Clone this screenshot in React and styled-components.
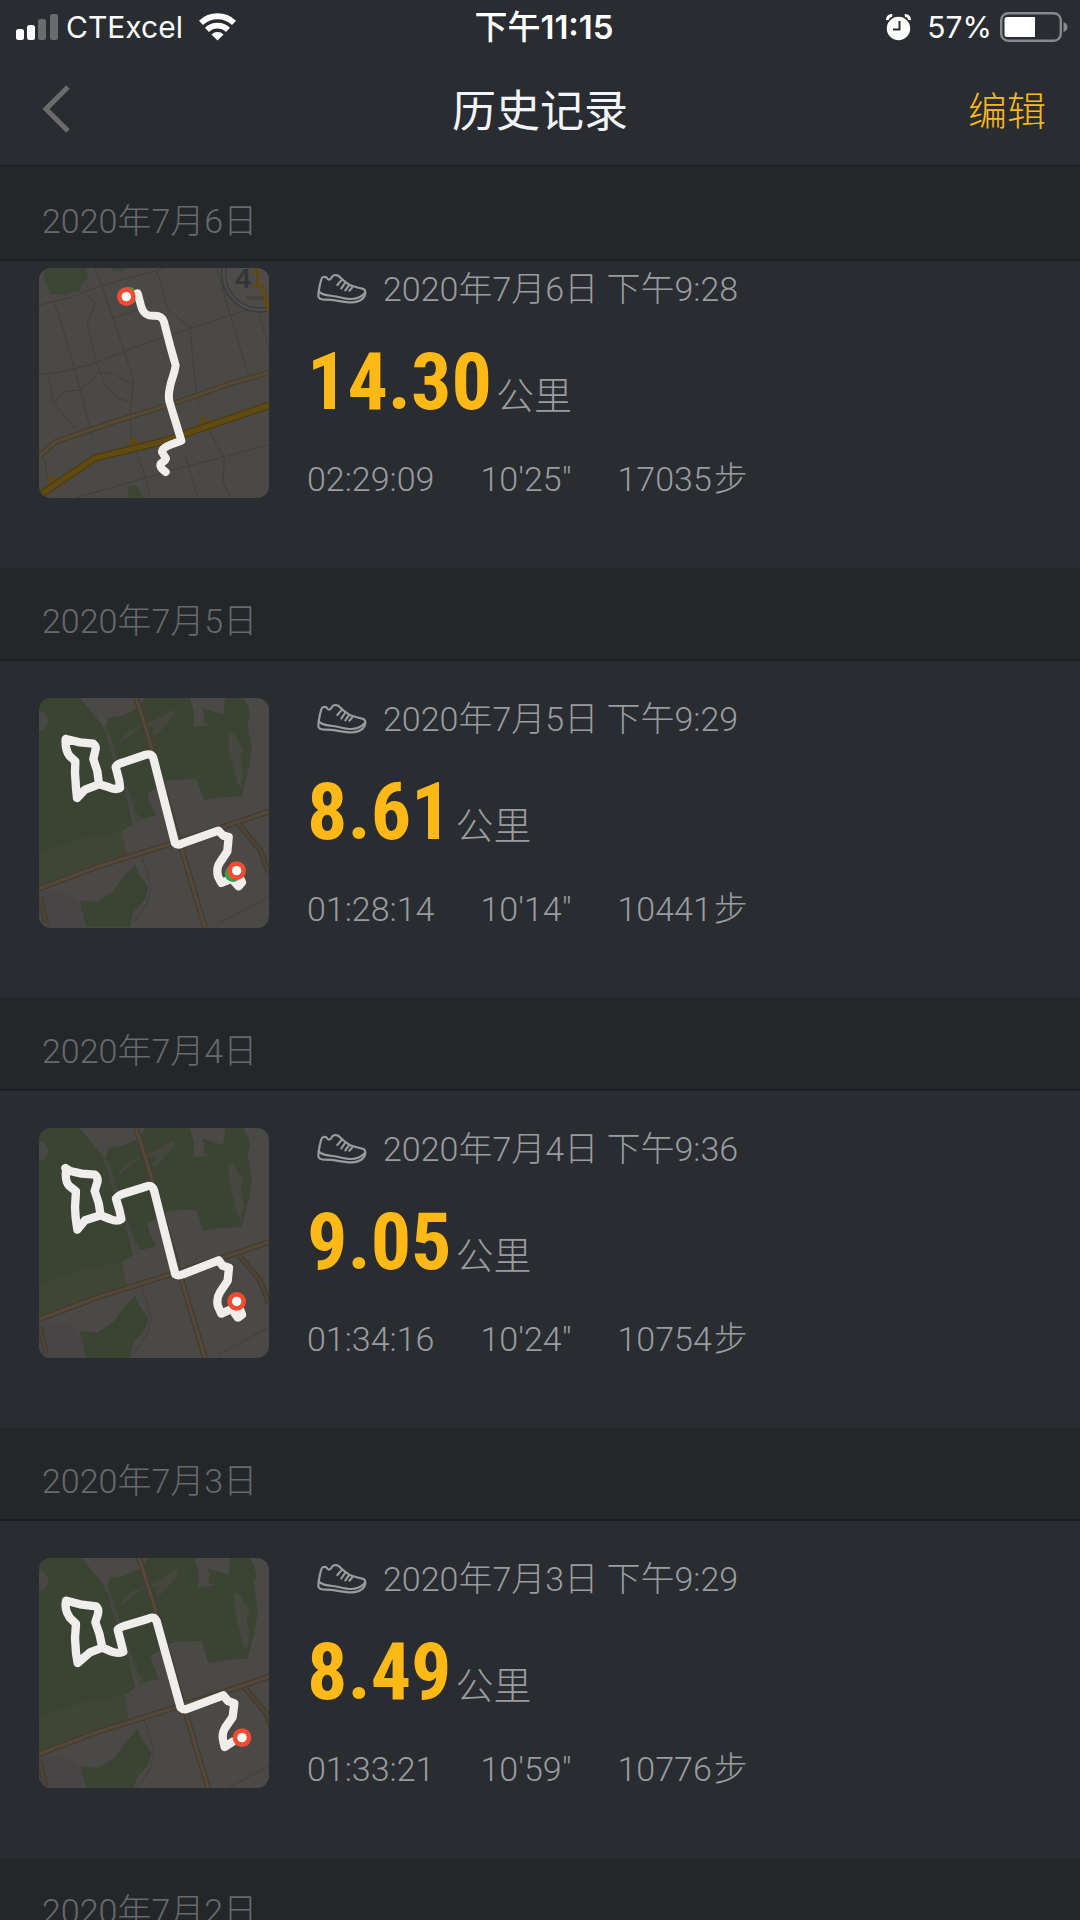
import React from "react";
import styled, { createGlobalStyle } from "styled-components";

const colors = {
  surface: "#292c31",
  header: "#24272a",
  line: "#1c1e21",
  text: "#9b9c9f",
  muted: "#67696c",
  accent: "#ffb916",
};

const GlobalStyle = createGlobalStyle`
  * {
    box-sizing: border-box;
  }

  body {
    margin: 0;
    background-color: ${colors.surface};
    color: ${colors.text};
    font-family: Roboto, "Noto Sans CJK SC", sans-serif;
    font-weight: 300;
  }
`;

const Screen = styled.div`
  height: 100vh;
  overflow: hidden;
`;

const StatusBar = styled.div`
  display: grid;
  grid-template-columns: 1fr auto 1fr;
  align-items: center;
  height: 54px;
  padding: 0 12px 0 16px;
  color: #ffffff;
  font-family: Inter, "Noto Sans CJK SC", sans-serif;
  font-size: 30px;
  font-weight: 400;
  line-height: 54px;
`;

const StatusGroup = styled.div`
  display: flex;
  align-items: center;
  gap: 8px;
  justify-content: ${props => (props.$end ? "flex-end" : "flex-start")};
`;

const Carrier = styled.span`
  margin-right: 8px;
`;

const Percent = styled.span`
  margin-left: 8px;
`;

const Clock = styled.div`
  padding-left: 4px;
  font-size: 33px;
  font-weight: 600;
`;

const Meridiem = styled.span`
  font-weight: 500;
`;

const Icon = styled.svg`
  display: block;
  flex: none;
`;

const NavBar = styled.header`
  display: grid;
  grid-template-columns: 1fr auto 1fr;
  align-items: center;
  height: 112px;
  padding: 0 34px 2px;
  border-bottom: 1px solid ${colors.line};
`;

const BackButton = styled.button`
  padding: 0 8px;
  border: 0;
  background: none;
  justify-self: start;
`;

const EditButton = styled.button`
  padding: 6px 0 0;
  border: 0;
  background: none;
  color: ${colors.accent};
  font-family: inherit;
  font-size: 39px;
  font-weight: 300;
  line-height: 48px;
  justify-self: end;
`;

const Title = styled.h1`
  margin: 0;
  padding-top: 6px;
  color: #f3f4f8;
  font-size: 44px;
  font-weight: 400;
  line-height: 56px;
`;

const History = styled.main`
  padding-top: 2px;
  background-color: ${colors.header};
`;

const DayHeader = styled.h2`
  height: 93px;
  margin: 0;
  padding: 32px 42px 0;
  border-bottom: 2px solid ${colors.line};
  background-color: ${colors.header};
  color: ${colors.muted};
  font-size: 34px;
  font-weight: 300;
  line-height: 42px;
`;

/* the first entry is scrolled part way under its header */
const Entry = styled.article`
  display: flex;
  gap: 38px;
  padding: ${props => (props.$tucked ? "7px" : "37px")} 39px 68px;
  background-color: ${colors.surface};
`;

const MapTile = styled.svg`
  display: block;
  flex: none;
  width: 230px;
  height: 230px;
  border-radius: 12px;
  background-color: #4b4946;
`;

const Details = styled.div`
  min-width: 0;
`;

const When = styled.div`
  display: flex;
  align-items: center;
  gap: 16px;
  padding-left: 10px;
  font-size: 34px;
  line-height: 42px;
`;

const Distance = styled.div`
  display: flex;
  align-items: baseline;
  gap: 4px;
  height: 84px;
  margin-top: 30px;
  font-size: 38px;
  line-height: 42px;
`;

const Amount = styled.strong`
  color: ${colors.accent};
  font-family: "Roboto Condensed", "Liberation Sans", sans-serif;
  font-size: 80px;
  font-weight: 700;
  line-height: 84px;
`;

const Stats = styled.div`
  display: flex;
  gap: 46px;
  margin-top: 34px;
  font-size: 34px;
  line-height: 42px;
`;

const Unit = styled.span`
  margin-left: 2px;
`;

const SignalIcon = () => (
  <Icon width="42" height="28" viewBox="0 0 42 28" fill="#ffffff">
    <rect x="0" y="16" width="8" height="11" rx="2.5" />
    <rect x="11" y="12" width="8" height="15" rx="2.5" />
    <rect x="22" y="6" width="8" height="21" rx="2.5" opacity="0.3" />
    <rect x="34" y="1" width="8" height="26" rx="2.5" opacity="0.3" />
  </Icon>
);

const WifiIcon = () => (
  <Icon width="37" height="28" viewBox="0 0 37 28">
    <g fill="none" stroke="#ffffff" strokeWidth="5.8">
      <path d="M2 9.800a24 24 0 0 1 33 0" />
      <path d="M8 16.800a15.200 15.200 0 0 1 21 0" />
    </g>
    <path d="M18.500 27.500l-6-6a8.600 8.600 0 0 1 12 0z" fill="#ffffff" />
  </Icon>
);

const AlarmIcon = () => (
  <Icon width="25" height="27" viewBox="0 0 25 27">
    <circle cx="12.5" cy="14.5" r="11.7" fill="#ffffff" />
    <path d="M1.6 6A4 4 0 0 1 6.2 1.6M23.4 6A4 4 0 0 0 18.8 1.6" fill="none" stroke="#ffffff" strokeWidth="3" />
    <path d="M13.5 7v8.500H7" fill="none" stroke={colors.surface} strokeWidth="2" />
  </Icon>
);

const BatteryIcon = () => (
  <Icon width="68" height="30" viewBox="0 0 68 30">
    <rect x="1.200" y="1.200" width="59.600" height="27.600" rx="7" fill="none" stroke="#88898c" strokeWidth="2.400" />
    <path d="M7 5h28v20H7a2.500 2.500 0 0 1-2.500-2.500v-15A2.500 2.500 0 0 1 7 5z" fill="#ffffff" />
    <path d="M63.500 10q4 1.500 4 5t-4 5z" fill="#88898c" />
  </Icon>
);

const BackIcon = () => (
  <Icon width="28" height="48" viewBox="0 0 28 48" fill="none" stroke="#6b6b6b" strokeWidth="5">
    <path d="M26 2L4 24l22 22" />
  </Icon>
);

const ShoeIcon = () => (
  <Icon width="50" height="32" viewBox="79 50 150 96" fill="none" stroke={colors.text} strokeWidth="6.5" strokeLinecap="round" strokeLinejoin="round">
    <path d="M84 106C86 92 89 78 92 69C94 61 103 60 108 64C111 71 118 72 122 65C125 57 134 54 143 58C153 69 165 78 179 87C194 93 210 94 220 99C228 106 223 120 216 127C205 137 190 139 174 138C151 136 128 130 105 130C91 130 84 127 83 120Z" />
    <path d="M84 106C94 115 109 118 126 119C146 121 162 128 181 128C199 128 213 121 222 111" />
    <path d="M152 72l-12 14M163 80l-11 16M174 88l-10 14M184 94l-8 9" />
  </Icon>
);

const Marker = ({ x, y }) => (
  <g>
    <circle cx={x} cy={y} r="28" fill="#f34b32" />
    <circle cx={x} cy={y} r="14" fill="#ffffff" />
  </g>
);

const CityMap = () => (
  <MapTile viewBox="27 38 690 690" role="img" aria-label="路线">
    <path d="M42 38H168L175 68L158 82L148 108L120 112L112 118H62L42 70Z" fill="#3c4634" />
    <path d="M245 38H295L275 48L250 47Z" fill="#3c4634" />
    <path d="M290 692L320 690L338 722V728H298Z" fill="#3c4634" />
    <g fill="none" stroke="#413f3c" strokeWidth="3">
      <path d="M27 150L125 125L215 90L380 45L405 38" />
      <path d="M27 357L85 352L180 328L345 265L475 222L600 180L717 148" />
      <path d="M75 145L105 240L150 400L175 500L188 540" />
      <path d="M195 38L215 90L250 190L300 340L310 380L300 470L303 550L345 660L360 728" />
      <path d="M165 110L195 145L172 205L195 310L228 395L265 430L300 438" />
      <path d="M75 440L105 408L150 405L180 380L205 350L250 355L305 385" />
      <path d="M55 360L72 445L135 520" />
      <path d="M380 45L415 165L480 215L490 330L505 450" />
      <path d="M250 190L330 160M560 38L610 210L655 358M660 85L717 275" />
      <path d="M135 728L390 655L580 605L717 568" />
      <path d="M465 600L505 728M540 530L583 610L580 680L600 728M45 610L52 670" />
    </g>
    <path d="M27 605L75 560L250 500L450 438L600 385L717 352" fill="none" stroke="#473e2e" strokeWidth="17" />
    <path d="M27 605L75 560L250 500L450 438L600 385L717 352" fill="none" stroke="#554a36" strokeWidth="9" />
    <path d="M298 570L302 540L330 565ZM490 515L513 495L512 470L525 488L545 492ZM52 690L58 660L85 672Z" fill="#5d4716" />
    <path d="M35 716L195 608L400 558L540 510L717 450" fill="none" stroke="#4c3d12" strokeWidth="23" />
    <path d="M35 716L195 608L400 558L540 510L717 450" fill="none" stroke="#614b12" strokeWidth="15" />
    <circle cx="690" cy="55" r="115" fill="#4e4c4a" stroke="#393b3c" strokeWidth="5" />
    <circle cx="690" cy="55" r="103" fill="none" stroke="#3b3d3e" strokeWidth="4" />
    <path d="M696 100L717 168" fill="none" stroke="#614b12" strokeWidth="14" />
    <path d="M648 128h52" stroke="#444342" strokeWidth="12" />
    <text x="616" y="97" fill="#333638" fontFamily="Liberation Sans" fontSize="84" fontWeight="700">
      4
    </text>
    <text x="660" y="97" fill="#5d4916" fontFamily="Liberation Sans" fontSize="84" fontWeight="700">
      1
    </text>
    <circle cx="296" cy="121" r="27" fill="#2fa24a" />
    <path
      d="M323 114C328 128 330 145 336 160C344 180 358 182 374 181C392 181 398 187 402 200L420 270L437 330C434 355 425 370 421 390C416 412 415 425 418 438L454 556L425 567C410 573 396 579 396 590L408 610C404 622 390 620 391 630C392 640 400 644 407 650"
      fill="none"
      stroke="#f0eeed"
      strokeWidth="24"
      strokeLinecap="round"
      strokeLinejoin="round"
    />
    <Marker x={289} y={124} />
  </MapTile>
);

const ParkGround = () => (
  <g>
    <path d="M27 24H150L205 92L225 115L240 180L285 300L308 405L275 425L272 445L290 495L27 592Z" fill="#3b4333" />
    <path d="M27 490L180 440L275 425L290 495L27 592Z" fill="#3f4636" />
    <path d="M27 64Q52 66 55 92Q52 118 27 124Z" fill="#4a4845" />
    <path d="M150 24H318L325 55L270 80L235 82L225 112L190 72Z" fill="#4b4946" />
    <path d="M235 84L275 78L325 55L345 24H480L492 70L490 110L530 108L575 98L570 82L535 90L515 55L580 75L585 24H640L655 50L660 80L652 100L665 180L655 240L635 320L580 322L520 332L510 300L500 268L425 270L408 275L352 312L360 340L378 378L330 390L300 330L285 300L262 210L240 150L226 112Z" fill="#3b4333" />
    <path d="M262 160L295 125L385 85L430 60Q440 66 430 78L400 115Q380 140 362 138L375 115L345 105L310 128L272 160Z" fill="#45463e" />
    <path d="M595 130Q610 120 620 150L643 180L632 200L640 250L634 298L622 280L598 190Z" fill="#464840" />
    <path d="M525 70L590 85L610 100L560 108L520 100Z" fill="#3b4333" />
    <path d="M222 110L240 150L262 230L300 330L325 400" fill="none" stroke="#444740" strokeWidth="10" />
    <path d="M27 605Q90 600 130 618Q155 640 160 713H27Z" fill="#474546" />
    <path d="M148 632L200 638L250 605L278 565L315 525L325 550L355 592L345 630L312 665L300 713H168Z" fill="#3b4333" />
    <g fill="none" stroke="#45423e" strokeWidth="4">
      <path d="M330 490L348 535L362 595L352 640L310 700" />
      <path d="M565 702L717 622" />
    </g>
    <g fill="none" stroke="#443d33" strokeWidth="18">
      <path d="M27 597L200 532L420 463L600 405L717 365" />
      <path d="M318 24L352 130L375 210L440 430L525 713" />
      <path d="M625 402L690 480L717 550M30 620L48 700" />
    </g>
    <g fill="none" stroke="#554838" strokeWidth="9">
      <path d="M318 24L352 130L375 210L440 430L525 713" />
      <path d="M27 597L200 532L420 463L600 405L717 365" />
    </g>
    <path d="M625 402L690 480L717 550M30 620L48 700" fill="none" stroke="#4d4436" strokeWidth="8" />
  </g>
);

const ParkMap = ({ route, marker, start, ground }) => (
  <MapTile viewBox="27 25 690 690" role="img" aria-label="路线">
    <g transform={ground}>
      <ParkGround />
    </g>
    <path d={route} fill="none" stroke="#f0eeed" strokeWidth="25" strokeLinecap="round" strokeLinejoin="round" />
    {start && <circle cx={start.x} cy={start.y} r="25" fill="#2fa24a" />}
    <Marker x={marker.x} y={marker.y} />
  </MapTile>
);

const days = [
  {
    date: "2020年7月6日",
    time: "下午9:28",
    distance: "14.30",
    duration: "02:29:09",
    pace: "10'25\"",
    steps: "17035",
    map: <CityMap />,
  },
  {
    date: "2020年7月5日",
    time: "下午9:29",
    distance: "8.61",
    duration: "01:28:14",
    pace: "10'14\"",
    steps: "10441",
    map: (
      <ParkMap
        route="M108 148L150 158L190 162Q200 170 196 182L190 208L202 245L207 284L165 300L141 325L138 295L135 250L136 215L118 198Q105 180 107 148M207 284L235 292Q255 302 270 295L268 275L257 232Q262 222 280 218L345 196Q365 190 370 205L435 460Q442 468 455 462L565 423L580 438L596 442L592 485L570 518Q558 535 564 560L574 580L605 567L626 590L636 578L630 565"
        start={{ x: 609, y: 552 }}
        marker={{ x: 620, y: 543 }}
      />
    ),
  },
  {
    date: "2020年7月4日",
    time: "下午9:36",
    distance: "9.05",
    duration: "01:34:16",
    pace: "10'24\"",
    steps: "10754",
    map: (
      <ParkMap
        route="M106 145L120 154L155 162L195 165Q205 173 202 188L194 214L206 250L212 287L165 302L142 330L137 295L135 262L138 215L117 198Q105 185 108 155M212 287L240 298Q262 308 274 298L268 270L258 237Q264 228 280 222L345 202Q365 192 372 212L436 464Q445 470 458 464L566 422L578 438L597 444L593 483L570 518Q558 537 564 560L574 582L605 568L624 594L636 585L630 570"
        ground="translate(0 2)"
        marker={{ x: 620, y: 545 }}
      />
    ),
  },
  {
    date: "2020年7月3日",
    time: "下午9:29",
    distance: "8.49",
    duration: "01:33:21",
    pace: "10'59\"",
    steps: "10776",
    map: (
      <ParkMap
        route="M110 153L150 164L198 170Q208 178 204 193L196 218L208 252L217 294L180 308L143 340L138 310L135 265L138 222L120 205Q102 180 108 153M217 294L245 306Q265 313 280 306L272 275L263 240Q268 234 285 228L355 207Q372 198 380 215L452 474Q460 482 475 476L580 437L594 454L613 461L608 502L585 535Q574 555 580 575L584 592L610 575"
        ground="translate(-1 -2) scale(1.03)"
        marker={{ x: 636, y: 564 }}
      />
    ),
  },
];

const HistoryEntry = ({ day, tucked }) => (
  <Entry $tucked={tucked}>
    {day.map}
    <Details>
      <When>
        <ShoeIcon />
        <span>
          {day.date} {day.time}
        </span>
      </When>
      <Distance>
        <Amount>{day.distance}</Amount>
        <span>公里</span>
      </Distance>
      <Stats>
        <span>{day.duration}</span>
        <span>{day.pace}</span>
        <span>
          {day.steps}
          <Unit>步</Unit>
        </span>
      </Stats>
    </Details>
  </Entry>
);

const App = () => {
  return (
    <Screen lang="zh-CN">
      <GlobalStyle />
      <StatusBar>
        <StatusGroup>
          <SignalIcon />
          <Carrier>CTExcel</Carrier>
          <WifiIcon />
        </StatusGroup>
        <Clock>
          <Meridiem>下午</Meridiem>11:15
        </Clock>
        <StatusGroup $end>
          <AlarmIcon />
          <Percent>57%</Percent>
          <BatteryIcon />
        </StatusGroup>
      </StatusBar>
      <NavBar>
        <BackButton aria-label="返回">
          <BackIcon />
        </BackButton>
        <Title>历史记录</Title>
        <EditButton>编辑</EditButton>
      </NavBar>
      <History>
        {days.map((day, index) => (
          <section key={day.date}>
            <DayHeader>{day.date}</DayHeader>
            <HistoryEntry day={day} tucked={index === 0} />
          </section>
        ))}
        <DayHeader>2020年7月2日</DayHeader>
      </History>
    </Screen>
  );
};

export default App;
